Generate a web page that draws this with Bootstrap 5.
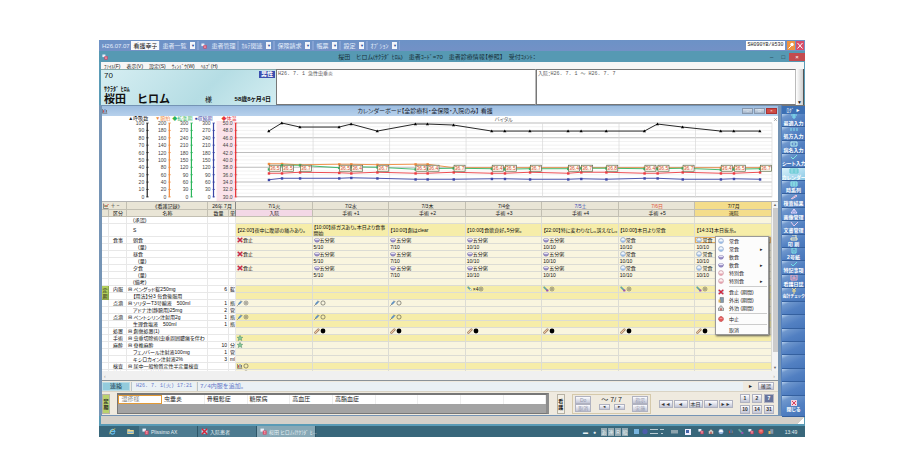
<!DOCTYPE html>
<html lang="ja">
<head>
<meta charset="utf-8">
<meta name="viewport" content="width=device-width, initial-scale=1">
<title>カレンダーボード</title>
<link href="https://cdn.jsdelivr.net/npm/bootstrap@5.3.0/dist/css/bootstrap.min.css" rel="stylesheet">
<style>
body{background:#fff;font:5px/6px "Liberation Sans","Noto Sans CJK JP",sans-serif;color:#222;font-feature-settings:"palt";padding:40px 95px 39px 99px}
button,input{font:inherit;font-feature-settings:inherit;color:inherit;border:0;padding:0;margin:0;background:none;white-space:nowrap}
a{color:inherit;text-decoration:none}
svg{display:block;flex:none}
.ic{width:6px;height:6px}
.app{background:#5a9bb6;overflow:hidden}
.topbar{height:11px;background:linear-gradient(#6c92c6,#7391c6);color:#e4edfa;font-size:6px;padding:1px 1px 1px 3px}
.topbar button{height:9px;border:1px solid #85a2d2;border-width:0 1px;padding:0 2px}
.dd{width:5px;height:7px;background:#f2f6fc;color:#2b4e94;font-size:4px;line-height:7px;text-align:center}
.staff{width:28px;height:9px;background:#f8f9fb;color:#222;padding:0 2px}
.term{width:39px;height:9px;background:#fff;color:#222;font:5px/9px "Liberation Mono",monospace;text-align:center;margin-right:1px}
.tool{width:8px;height:9px;margin-left:1px}
.titlebar{height:11px;background:#5699b3;color:#17303a;padding-left:3px;font-size:6px}
.closebtn{width:16px;height:8px;background:#c44b4f;color:#fff;line-height:8px}
.menubar{height:7px;background:#f6f6f6;margin:0 1px 0 2px;padding-left:3px;gap:6px}
.patient{height:36px;margin:0 1px 0 2px;background:#fff}
.pinfo{width:175px;background:linear-gradient(135deg,#d6eef2,#b5dde4 60%,#d3edf1);padding:1px 1px 1px 3px;border-top:1px solid #8aa;color:#111}
.sex{background:#3c4fae;color:#fff;font-size:6px;line-height:7px;width:16px;height:7px;text-align:center;font-weight:700}
.pid{font-size:8px;line-height:9px;font-weight:500}
.pname{font-size:11px;line-height:13px;font-weight:700;font-feature-settings:normal}
.kana{font-size:6px;line-height:7px;padding-top:6px;font-weight:700}
.sama{font-size:7px;margin-left:35px}
.age{font-size:6px;line-height:13px}
.memo{border:1px solid #777;border-right-color:#bbb;background:#fff;font-family:"Liberation Mono","Noto Sans CJK JP",monospace;padding:1px;color:#555}
.vs{width:8px;background:linear-gradient(90deg,#fff,#cfcfcf);border-right:1px solid #555;font-size:5px}
.inner{border:solid #7594b5;border-width:1px 3px;background:#efeadf;min-width:0}
.innertitle{height:10px;background:linear-gradient(#9dbde0,#b7d1ec);color:#1b2531;font-size:6px}
.wb{width:11px;height:6px;background:linear-gradient(#d5dfea,#a3b4c9);border:1px solid #8798ae;color:#fff;font-size:4px;line-height:4px;margin-right:1px}
.wb.x{background:#cf4b45;border-color:#a33}
.chart{width:100%;height:auto;background:#fff}
.sheet{height:169px;overflow:hidden}
.grid-t{table-layout:fixed;width:100%;border-collapse:separate;border-spacing:0;color:#111}
.grid-t td,.grid-t th{height:7px;padding:0 0 0 1px;border:solid #dcdcd4;border-width:0 1px 1px 0;line-height:6px;white-space:nowrap;overflow:hidden;font-weight:400}
.grid-t th{background:#e9e5d6;border-color:#c2bfb2;text-align:center}
.grid-t tr.note td{height:13px;white-space:normal}
.grid-t td.n{background:#fff;border-color:#e8e8e8}
.grid-t td.r{text-align:right;padding-right:1px}
.grid-t td.l{background:#f9f5df}
.grid-t td.y{background:#f6eda9}
.grid-t .edge{border-right-color:#888}
.grid-t td.teiki{background:#b3ce5c;text-align:center;padding:0;white-space:normal;border-color:#91a94a}
.grid-t th.pink{background:#f3d8e6}.grid-t th.today{background:#f4dd8b;text-decoration:underline}
.sat{color:#3c49b4}.sun{color:#e2523a}
.grid-t td svg{display:inline-block;vertical-align:-1px}
.grid-t td.sel{box-shadow:inset 0 0 0 1px #e8ad5c}
.vscroll{width:6px;background:#f3f3f3;color:#666;font-size:4px}
.thumb{width:5px;background:#cbcbcb;height:144px}
.hscroll{height:9px;background:#f0f0f0;color:#999;padding:0 3px 0 2px}
.ctx{position:absolute;top:34px;right:9px;width:54px;background:#fcfcfc;border:1px solid #999;box-shadow:1px 1px 2px #555;padding:0 1px}
.ctx button{height:8px;width:100%;gap:5px;text-align:left}
.ctx .ic{margin-left:1px}
.ctx hr{margin:1px 0 1px 12px;border-top:1px solid #ccc;opacity:1}
.contact{height:11px;border-top:1px solid #8b9399;padding:1px 4px 1px 0;gap:1px}
.contact input{background:#eaf1f5;color:#6678c8;font:5px/9px "Liberation Mono","Noto Sans CJK JP",monospace;padding-left:4px;border-left:1px solid #b9c4cb;height:9px}
.cbtn{width:28px;height:9px;background:#93cbdc;border:1px solid #b9dce6;color:#204050;font-size:6px}
.d1{width:65px}.contact .d2{min-width:0;font-size:6px;padding-left:2px}
.btn3{background:linear-gradient(#fdfdff,#c2c5d6);border:1px solid #b0b2c0;color:#333;text-align:center;line-height:6px;height:8px;width:14px}
.okbtn{width:16px}
.navs{gap:1px}
.foot{height:24px;padding:1px 4px 1px 0;border-top:1px solid #d9d3c4}
.vbtn{width:8px;height:20px;background:#f2efe6;border:1px solid #b7b2a4;white-space:normal;line-height:6px;font-weight:700}
.vbtn.g{background:#b9d26c}
.dx{width:432px;height:21px;background:#a3a3a3;border:1px solid #777;border-top-width:2px;border-right:3px solid #8d8d8d}
.dx a{height:9px;background:#fff;border-right:1px solid #eee;line-height:8px;padding-left:2px;flex:1 1 0;min-width:0;font-size:6px}
.dx a.on{border:1px solid #e39a35;color:#888;line-height:6px}
.grp{width:79px;height:20px;border:1px solid #d5c9ab;padding:1px 2px}
.grp .btn3{width:16px;color:#9297ab}
.grp .sm{width:11px;height:6px;line-height:4px;font-size:4px;color:#333}
.period{font-size:7px;line-height:8px}
.nums{display:grid;grid-template-columns:repeat(3,10px);gap:2px}
.nums .btn3{width:10px;height:9px;font-weight:700}
.nums .on{background:#68749b;color:#fff}
.side{width:24px;background:#5580bd;padding:0 0 0 1px;color:#fff}
.side a{flex:1 1 0;min-height:0;background:linear-gradient(155deg,#bcd4ee 0,#6f97cd 18%,#5280c2 55%,#4776ba);border-bottom:1px solid #34609f;font-weight:700;white-space:nowrap;text-align:center;line-height:6px;overflow:hidden}
.side a svg{margin:0 auto;width:10px;height:6px}
.side a.cur{background:linear-gradient(155deg,#d9f1fa,#8bc9e6)}
.side a.long{font-size:4px}
.side a.end{flex:0 0 21px;padding-top:4px}
.sidehead{height:9px;background:#3d70b4;line-height:8px;text-align:center;border-top:1px solid #777}
.status{height:8px;background:#d4d0c9;margin:0 1px 0 2px}
.grip{width:7px;height:7px;background:linear-gradient(135deg,#d4d0c9 50%,#fff 50%)}
.taskbar{height:11px;margin-top:2px;background:#38677b;color:#e6f0f4}
.taskbar button{height:11px;width:59px;background:#4d7b90;border-right:1px solid #2e5668;gap:2px;padding-left:3px}
.taskbar button.on{background:#87a8b6}
.taskbar .ic{width:7px;height:7px}
.start{width:40px;padding-left:10px;gap:11px}
.kbd{width:6px;height:8px;background:#93a9b2;line-height:8px;text-align:center}
.tray{gap:1px}.tray .ic{margin-right:3px;width:6px}
.clock{width:28px;text-align:center}
</style>
</head>
<body>
<svg width="0" height="0" class="position-absolute" aria-hidden="true">
<symbol id="bowl" viewBox="0 0 6 6"><path d="M.3 2.6h5.4Q5.3 5.3 3 5.3T.3 2.6z" fill="#9c90cc" stroke="#66609a" stroke-width=".4"/><ellipse cx="3" cy="2.5" rx="2.6" ry="1.1" fill="#e8e4f6" stroke="#7770a8" stroke-width=".4"/></symbol>
<symbol id="rice" viewBox="0 0 6 6"><circle cx="3" cy="3" r="2.4" fill="#f2f7fd" stroke="#5878a8" stroke-width=".5"/><path d="M.7 3.4h4.6Q4.8 5.4 3 5.4T.7 3.4z" fill="#9bbbe4"/></symbol>
<symbol id="spec" viewBox="0 0 6 6"><circle cx="3" cy="3" r="2.4" fill="#fdf1f3" stroke="#b0667a" stroke-width=".5"/><path d="M.7 3.4h4.6Q4.8 5.4 3 5.4T.7 3.4z" fill="#e6a3ae"/></symbol>
<symbol id="stop" viewBox="0 0 6 6"><path d="M.5 1h5v4h-5z" fill="#b9cde0"/><path d="M.7.7l4.6 4.6M5.3.7L.7 5.3" stroke="#d5263c" stroke-width="1.3"/></symbol>
<symbol id="needle" viewBox="0 0 6 6"><path d="M.3 5.7l1.8-1.8" stroke="#444" stroke-width=".6"/><path d="M1.8 4.2l2.4-2.5" stroke="#5d8fc2" stroke-width="1.8"/><path d="M4 .7l1.3 1.3" stroke="#456" stroke-width=".7"/></symbol>
<symbol id="band" viewBox="0 0 6 6"><path d="M1.4 4.6l3-3" stroke="#8b6a4c" stroke-width="2.2" stroke-linecap="round"/><path d="M1.5 4.5l2.8-2.8" stroke="#efc8a8" stroke-width="1.2" stroke-linecap="round"/></symbol>
<symbol id="star" viewBox="0 0 6 6"><path d="M3 .3l.8 1.8 2 .2-1.5 1.3.5 2L3 4.5 1.2 5.6l.5-2L.2 2.3l2-.2z" fill="#8ac99b" stroke="#3a7a55" stroke-width=".4"/></symbol>
<symbol id="pill" viewBox="0 0 6 6"><path d="M1.2 1.3l2 2" stroke="#68a5a0" stroke-width="1.8" stroke-linecap="round"/><circle cx="4.3" cy="4.4" r="1.2" fill="#9a55b0"/></symbol>
<symbol id="pill1" viewBox="0 0 6 6"><path d="M1.2 1.3l2.5 2.6" stroke="#68a5a0" stroke-width="1.8" stroke-linecap="round"/><path d="M3 3.2l1 1" stroke="#eee" stroke-width="1.5"/></symbol>
<symbol id="ring" viewBox="0 0 6 6"><circle cx="3" cy="3" r="2.1" fill="none" stroke="#333" stroke-width=".5"/></symbol>
<symbol id="dbl" viewBox="0 0 6 6"><circle cx="3" cy="3" r="2" fill="none" stroke="#555" stroke-width=".5"/><circle cx="3" cy="3" r=".9" fill="none" stroke="#555" stroke-width=".5"/></symbol>
<symbol id="dot" viewBox="0 0 6 6"><circle cx="3" cy="3" r="2.4" fill="#000"/></symbol>
<symbol id="lab" viewBox="0 0 6 6"><path d="M.5 1v4.3h4.8" stroke="#555" fill="none" stroke-width=".6"/><path d="M1.6 4.6V2.2" stroke="#c44" stroke-width="1"/><path d="M3 4.6V1" stroke="#567fbd" stroke-width="1"/><path d="M4.5 4.6V2" stroke="#777" stroke-width="1"/></symbol>
<symbol id="door" viewBox="0 0 6 6"><path d="M2 .5h3.5v5H2z" fill="#7f9ab0" stroke="#555" stroke-width=".4"/><path d="M.5 2.5h2v3h-2z" fill="#e0b35a"/></symbol>
<symbol id="home" viewBox="0 0 6 6"><path d="M.5 3L3 .6 5.5 3v2.6h-5z" fill="#ccc" stroke="#555" stroke-width=".5"/><path d="M2.3 3.2h1.4v2.3H2.3z" fill="#c0504a"/></symbol>
<symbol id="halt" viewBox="0 0 6 6"><path d="M2 .6h2L5.4 2v2L4 5.4H2L.6 4V2z" fill="#e45a5a" stroke="#a33" stroke-width=".4"/><path d="M1.6 2.4h2.8" stroke="#f7b0b0" stroke-width=".8"/></symbol>
<symbol id="karte" viewBox="0 0 6 6"><path d="M.4.5h3v2.6h-3z" fill="#e8f0fb"/><path d="M2.4 2.2h3.2v3.4H2.4z" fill="#d9405f"/><path d="M3.2 3.2h1.6M3.2 4.4h1.6" stroke="#fff" stroke-width=".5"/></symbol>
<symbol id="folder" viewBox="0 0 6 6"><path d="M.2 1h2l.6.8h3v3.4H.2z" fill="#f0d688"/><path d="M.6 3h4.8v1.4H.6z" fill="#7fb6dd"/></symbol>
<symbol id="ie" viewBox="0 0 6 6"><path d="M4.9 3.9A2 2 0 1 1 5 3H1.6" fill="none" stroke="#62bdf0" stroke-width="1"/><path d="M.6 5.3Q.9 2 5.4.6" fill="none" stroke="#f2c94c" stroke-width=".6"/></symbol>
<symbol id="axes" viewBox="0 0 6 6"><path d="M.5.5v5h5" stroke="#555" fill="none" stroke-width=".6"/><path d="M1 1.5l2 2.5L5.500 1" stroke="#d9403a" fill="none" stroke-width=".8"/><path d="M1 4l2-2 2 2" stroke="#3aa060" fill="none" stroke-width=".6"/></symbol>
</svg>

<main class="app">
<header>
<div class="topbar d-flex align-items-center">
 <span>H26.07.07</span>&nbsp;<input class="staff" value="看護幸子" aria-label="担当者">
 <button class="d-flex align-items-center gap-1">患者一覧<span class="dd">▼</span></button>
 <button class="d-flex align-items-center gap-1"><svg class="ic"><use href="#karte"/></svg>患者管理</button>
 <button class="d-flex align-items-center gap-1">ｶﾙﾃ関連<span class="dd">▼</span></button>
 <button class="d-flex align-items-center gap-1">保険請求<span class="dd">▼</span></button>
 <button class="d-flex align-items-center gap-1">帳票<span class="dd">▼</span></button>
 <button class="d-flex align-items-center gap-1">設定<span class="dd">▼</span></button>
 <button class="d-flex align-items-center gap-1">ｵﾌﾟｼｮﾝ<span class="dd">▼</span></button>
 <input class="term ms-auto" value="SH090YB/8530" aria-label="端末">
 <svg class="tool" viewBox="0 0 8 9"><path d="M0 0h8v9H0z" fill="#ee9440"/><path d="M1.5 7.5l3-3" stroke="#fff"/><circle cx="5" cy="3.5" r="1.7" fill="#fff"/></svg>
 <svg class="tool" viewBox="0 0 8 9"><path d="M0 0h8v9H0z" fill="#d94d68"/><path d="M1.5 2l5 5.5M6.5 2l-5 5.5" stroke="#fff"/></svg>
</div>
<div class="titlebar d-flex align-items-center">
 <svg class="ic"><use href="#karte"/></svg>
 <span class="flex-grow-1 text-center">桜田　ヒロム(ｻｸﾗﾀﾞ ﾋﾛﾑ)　患者ｺｰﾄﾞ=70　患者診療情報【参照】　受付ｺﾒﾝﾄ：</span>
 <button class="px-1" aria-label="最小化">–</button><button class="px-1" aria-label="最大化">□</button><button class="closebtn" aria-label="終了">×</button>
</div>
<nav class="menubar d-flex align-items-center"><a href="#">ﾌｧｲﾙ(F)</a><a href="#">表示(V)</a><a href="#">設定(S)</a><a href="#">ｳｨﾝﾄﾞｳ(W)</a><a href="#">ﾍﾙﾌﾟ(H)</a></nav>
<section class="patient d-flex">
 <div class="pinfo flex-shrink-0 d-flex flex-column">
  <div class="d-flex justify-content-between"><span class="pid">70</span><span class="sex">男性</span></div>
  <div class="kana">ｻｸﾗﾀﾞ ﾋﾛﾑ</div>
  <div class="d-flex align-items-center pe-1"><span class="pname">桜田　ヒロム</span><span class="sama me-auto">様</span><b class="age">58歳8ヶ月4日</b></div>
 </div>
 <div class="memo w-50">H26. 7. 1 急性虫垂炎</div>
 <div class="memo w-50">入院：H26. 7. 1 ～ H26. 7. 7</div>
 <div class="vs flex-shrink-0 d-flex align-items-end justify-content-center">▼</div>
</section>
</header>

<div class="d-flex">
<section class="inner flex-grow-1">
 <div class="innertitle d-flex align-items-center">
  <svg class="ic"><use href="#lab"/></svg>
  <span class="flex-grow-1 text-center">カレンダーボード【全診療科・全保険・入院のみ】 看護</span>
  <button class="wb" aria-label="最小化">–</button><button class="wb" aria-label="元に戻す">□</button><button class="wb x" aria-label="閉じる">×</button>
 </div>
 <svg class="chart" id="chart" viewBox="104 116 673 86" role="img" aria-label="バイタル"></svg>
 <div class="sheet position-relative d-flex">
  <div class="flex-grow-1"><table class="grid-t" id="sheet"><colgroup><col style="width:7px"><col style="width:18px"><col style="width:81px"><col style="width:21px"><col style="width:7px"><col span="7"></colgroup></table></div>
  <div class="vscroll d-flex flex-column align-items-center flex-shrink-0"><span>▲</span><div class="thumb"></div><span class="mt-auto">▼</span></div>
  <div class="ctx" id="ctx"></div>
 </div>
 <div class="hscroll d-flex align-items-center justify-content-between"><span>‹</span><span>›</span></div>
 <div class="contact d-flex align-items-center">
  <button class="cbtn">連絡</button><input class="d1" value="H26. 7. 1(火) 17:21" aria-label="連絡日時"><input class="d2 flex-grow-1" value="7/4内服を追加。" aria-label="連絡内容">
  <span class="px-1">►</span><button class="btn3 okbtn">確認</button>
 </div>
 <div class="foot d-flex align-items-center justify-content-between">
  <button class="vbtn g">定期</button>
  <nav class="dx d-flex align-items-start"><a class="on" href="#">湿疹様</a><a href="#">虫垂炎</a><a href="#">骨粗鬆症</a><a href="#">糖尿病</a><a href="#">高血圧</a><a href="#">高脂血症</a><a></a><a></a><a></a><a></a></nav>
  <button class="vbtn">看護</button>
  <div class="grp d-flex justify-content-between">
   <div class="d-flex flex-column"><button class="btn3">Do</button><button class="btn3">取消</button></div>
   <div class="text-center"><div class="period">～ 7/ 7</div><div class="d-flex gap-1"><button class="btn3 sm" aria-label="前">◄</button><button class="btn3 sm" aria-label="次">►</button></div></div>
   <div class="d-flex flex-column"><button class="btn3">指示</button><button class="btn3">実施</button></div>
  </div>
  <div class="d-flex navs"><button class="btn3">◄◄</button><button class="btn3">◄</button><button class="btn3">本日</button><button class="btn3">►</button><button class="btn3">►►</button></div>
  <div class="nums"><button class="btn3">1</button><button class="btn3">2</button><button class="btn3 on">7</button><button class="btn3">10</button><button class="btn3">14</button><button class="btn3">31</button></div>
 </div>
</section>
<aside class="side d-flex flex-column flex-shrink-0" id="side"><div class="sidehead">ﾛｸﾞ ►</div></aside>
</div>
<div class="status d-flex justify-content-end align-items-end"><div class="grip"></div></div>
<footer class="taskbar d-flex align-items-center">
 <div class="start d-flex"><svg class="ic"><use href="#ie"/></svg><svg class="ic"><use href="#folder"/></svg></div>
 <button class="d-flex align-items-center"><svg class="ic"><use href="#karte"/></svg>Plissimo AX</button>
 <button class="d-flex align-items-center"><svg class="ic"><use href="#stop"/></svg>入院患者</button>
 <button class="d-flex align-items-center on"><svg class="ic"><use href="#karte"/></svg>桜田 ヒロム(ｻｸﾗﾀﾞ ﾋ...</button>
 <div class="tray d-flex align-items-center ms-auto"><span>▬</span><span class="px-1">●</span><span class="kbd">あ</span><span class="kbd">連</span><span class="kbd">R</span><span class="kbd">般</span>
 <svg class="mx-1" width="60" height="9" viewBox="0 0 60 9"><path d="M1 2h5v5H1z" fill="#78b4df"/><circle cx="12" cy="4.500" r="2.600" fill="#4d5cab"/><path d="M17 2.500h8M17 6.500h8M27 2.500h4M28 6.500h2" stroke="#b9ccd4"/><path d="M38 3h7v3.500h-7z" fill="#8ca3ad"/><path d="M52 2h6v6h-6z" fill="#eef"/><path d="M53 3h3v3h-3z" fill="#46a"/></svg>
 <svg class="ic"><use href="#karte"/></svg><svg class="ic"><use href="#home"/></svg><svg class="ic"><use href="#rice"/></svg><svg class="ic"><use href="#lab"/></svg><svg class="ic"><use href="#pill"/></svg><svg class="ic"><use href="#karte"/></svg><svg class="ic"><use href="#halt"/></svg><svg class="ic"><use href="#door"/></svg></div>
 <span class="clock">13:49</span>
</footer>
</main>
<script src="https://cdn.jsdelivr.net/npm/bootstrap@5.3.0/dist/js/bootstrap.bundle.min.js"></script>
<script>
const u = (n) => `<svg class="ic"><use href="#${n}"/></svg>`;

/* vital chart */
const top0 = 123, step = 7.35, dayX = i => 238 + i * 76.15;
let s = '<rect x="218" y="121" width="19" height="80" fill="#fbe3ea"/>';
for (let i = 0; i <= 20; i++) { const y = top0 + i * step / 2; s += `<path d="M238 ${y}H771" stroke="${i % 4 ? '#e9e9e9' : '#bdbdbd'}" stroke-width="${i % 4 ? .6 : 1}"/>`; }
for (let i = 0; i <= 7; i++) s += `<path d="M${dayX(i)} 123V197" stroke="#d8d8d8" stroke-width=".7"/>`;
const axes = [[149,'#222','▲呼吸数',130,i=>100-10*i],[171,'#f08a3c','▼脈拍',157,i=>200-20*i],[193,'#2bb55a','◆拡張期',174,i=>300-30*i],[215,'#3a45a5','●収縮期',196,i=>300-30*i],[237,'#e8383d','◆体温',223,i=>(50-2*i).toFixed(1)]];
axes.forEach(([x, c, t, tx, f]) => {
  s += `<path d="M${x} ${top0}V197" stroke="${c}" stroke-width="1.2"/><text x="${tx}" y="120" fill="${c}">${t}</text>`;
  for (let i = 0; i <= 10; i++) { const y = top0 + i * step; s += `<path d="M${x-1} ${y}h2.500" stroke="${c}" stroke-width=".7"/><text x="${x-3}" y="${y+2}" text-anchor="end" fill="#444">${f(i)}</text>`; }
});
const xs = [270,283,301,340,352,378,416,428,454,492,505,530,568,581,606,644,657,682,720,733,759];
const series = [
 ['#111',[131,123,127,127,124,131,124,124,125,131,131,131,131,131,131,131,124,127,131,131,131]],
 ['#f08a3c',[163.6,163.6,164.6,164,164,164.5,164,164,167.500,167.500,167.500,167.500,167.500,167.500,167.500,167.500,167.500,167.500,167.500,167.500,167.500]],
 ['#35b565',[169,165,165,167.500,166.500,167,169,168.500,168,168.500,169,168.500,168.500,168,168,168.500,168.500,168,169.500,169,168.500]],
 ['#ea3b40',[173,173,172,172.500,173,172,173,173,172,173,173,172,173,172,172,173,173,172,173,173,172]],
 ['#3b46a8',[179.500,178,178,178,177.500,178,179,179,179,178.500,178.500,179,179,178.500,179,178,178,179,179,178.500,179]]];
series.forEach(([c, ys]) => {
  s += `<polyline fill="none" stroke="${c}" stroke-width=".9" points="${xs.map((x, i) => x + ',' + ys[i]).join(' ')}"/>`;
  xs.forEach((x, i) => s += c === '#111' ? `<path d="M${x} ${ys[i]-1.500}l1.600 2.700h-3.200z"/>` : `<rect x="${x-1}" y="${ys[i]-1}" width="2.400" height="2.400" fill="${c}"/>`);
});
['36.5','36.5','36.7','36.5','36.4','36.7','36.5','36.4','36.7','36.4','36.5','36.7','36.4','36.7','36.8','36.4','36.5','36.7','36.4','36.5','36.7'].forEach((t, i) =>
  s += `<rect x="${xs[i]+.5}" y="165" width="11" height="6" fill="#fffdf2" stroke="#5c6848" stroke-width=".7"/><text x="${xs[i]+6}" y="170" text-anchor="middle" fill="#cf4a30">${t}</text>`);
s += '<text x="504" y="121" text-anchor="middle" fill="#555">バイタル</text><path d="M773 118l3 3M776 118l-3 3" stroke="#888" stroke-width=".6"/><path d="M104 201.500H777" stroke="#999"/>';
document.getElementById('chart').innerHTML = s;

/* calendar sheet */
const days = ['7/1火','7/2水','7/3木','7/4金','7/5土','7/6日','7/7月'], sub = ['入院','手術 +1','手術 +2','手術 +3','手術 +4','手術 +5','退院'];
const hc = i => i === 6 ? 'today' : '';
let h = '<thead><tr><th colspan="2" class="text-start">' + u('axes').replace('class="ic"', 'class="ic d-inline-block"') + ' ＋ −</th><th>《看護記録》</th><th colspan="2" class="edge">26年 7月</th>' +
 days.map((d, i) => `<th class="${hc(i)}">${i === 4 ? '<span class="sat">' + d + '</span>' : i === 5 ? '<span class="sun">' + d + '</span>' : d}</th>`).join('') +
 '</tr><tr><th></th><th>区分</th><th>名称</th><th>数量</th><th class="edge">単</th>' + sub.map((d, i) => `<th class="${i ? hc(i) : 'pink'}">${d}</th>`).join('') + '</tr></thead><tbody>';
const E = ['','','','','','',''];
const gruel = u('bowl') + '五分粥', rice = u('rice') + '常食', no = u('stop') + '食止';
const meal = [no, gruel, gruel, gruel, gruel, rice, rice], qty = ['','5/10','7/10','10/10','10/10','10/10','10/10'];
const drip = u('needle') + u('ring'), dripD = u('needle') + u('dbl'), bd = u('band') + u('dot');
const rows = [
 ['','　(承認)','','','l',E],
 ['','　S','','','y',['【22:00】夜中に腹部の痛みあり。','【10:00】排ガスあり。本日より食事開始','【10:00】創はclear','【10:00】食欲良好。5分粥。','【22:00】特に変わりなし。訴えなし。','【10:00】本日より常食','【14:31】本日抜糸。']],
 ['食事','　朝食','','','l',meal],['','　　(量)','','','l',qty],['','　昼食','','','l',meal],['','　　(量)','','','l',qty],['','　夕食','','','l',meal],['','　　(量)','','','l',qty],['','　(備考)','','','l',E],
 ['内服','⊟ ペングッド錠250mg','6','錠','y',['','','',u('pill1')+'×4'+u('dbl'),u('pill')+u('dbl'),u('pill')+u('dbl'),u('pill')+u('dbl')]],
 ['','　【用法】分3 毎食後服用','','','y',E],
 ['点滴','⊟ ソリターT3号輸液　500ml','1','瓶','l',[dripD,drip,drip,'','','','']],['','　アドナ注(静脈用)25mg','2','管','l',E],
 ['点滴','⊟ ペントシリン注射用2g','1','瓶','y',[dripD,drip,drip,'','','','']],['','　生理食塩液　500ml','1','瓶','y',E],
 ['処置','⊟ 創傷処置(1)','','','l',['',bd,bd,bd,bd,bd,bd]],
 ['手術','⊟ 虫垂切除術(虫垂周囲膿瘍を伴わ','','','y',[u('star'),'','','','','','']],
 ['麻酔','⊟ 脊椎麻酔','10','分','l',[u('star'),'','','','','','']],
 ['','　フェノバール注射液100mg','1','管','l',E],['','　キシロカイン注射液2%','3','ml','l',E],
 ['検査','⊟ 尿中一般物質定性半定量検査','','','y',[u('lab')+u('ring'),'','','','','','']],
 ['検査','⊟ 尿沈渣(鏡検法)','','','l',[u('lab')+u('ring'),'','','','','','']]];
rows.forEach((r, n) => {
  const first = n === 9 ? '<td class="teiki" rowspan="2">定期</td>' : n === 10 ? '' : '<td class="n"></td>';
  h += `<tr class="${n === 1 ? 'note' : ''}">${first}<td class="n text-center">${r[0]}</td><td class="n">${r[1]}</td><td class="n r">${r[2]}</td><td class="n edge">${r[3]}</td>` +
    r[5].map((c, i) => `<td class="${r[4]}${n === 2 && i === 6 ? ' sel' : ''}">${c}</td>`).join('') + '</tr>';
});
document.getElementById('sheet').insertAdjacentHTML('beforeend', h + '</tbody>');

/* context menu */
document.getElementById('ctx').innerHTML = [['rice','常食'],['rice','常食',1],['bowl','軟食'],['bowl','軟食',1],['spec','特別食'],['spec','特別食',1],0,['stop','食止 (期間)'],['door','外出 (期間)'],['home','外泊 (期間)'],0,['halt','中止'],0,['','取消']]
 .map(m => m ? `<button class="d-flex align-items-center">${u(m[0])}<span>${m[1]}</span>${m[2] ? '<span class="ms-auto pe-1">▸</span>' : ''}</button>` : '<hr>').join('');

/* side buttons */
const g = ['M2 1h6M5 0v5M3 3h4','M2 4V1M5 4V1M8 4V1','M2 1h6v4H2zM4 3h2','M2 3l2 2 4-4','M1 1h8v4H1zM1 3h8M5 1v4','M2 1h6v4H2zM2 3h6M5 1v4','M2 5l5-4 1 1-5 3','M2 5l3-4 3 4zM5 1v4','M2 1l3 4 4-4','M2 3h6v2H2zM3 0h4v3','M3 0h4v5H3zM4 3h2','M2 3l2 2 4-4','M2 0h6v5H2zM5 1v3M3 3h4','M3 0l2 2 2-2M5 2v4M3 3h4'];
const cols = ['#7fe0ef','#7fe0ef','#b6f2f2','#7fe8e0','#5cc9cf','#8ff0ea','#f0c8e0','#e6d4ff','#e8c8ec','#f3efc8','#7fe8e8','#6fe0e8','#f7a9bd','#f4dd8a'];
document.getElementById('side').insertAdjacentHTML('beforeend',
 ['最適入力','処方入力','病名入力','シート入力','カレンダー','時系列','検査結果','画像管理','文書管理','印 刷','2号紙','特記事項','看護日誌','会計チェック','','','','','','',''].map((t, i) =>
  t ? `<a href="#" class="${i === 4 ? 'cur' : t.length > 5 ? 'long' : ''}"><svg viewBox="0 0 10 6"><path d="${g[i]}" fill="none" stroke="${cols[i]}"/></svg>${t}</a>` : '<a></a>').join('') +
 '<a href="#" class="end"><svg viewBox="0 0 10 6"><path d="M2 0h6v6H2z" fill="#f4d4df"/><path d="M3 1l4 4M7 1L3 5" stroke="#d9405f"/></svg>閉じる</a>');
</script>
</body>
</html>
